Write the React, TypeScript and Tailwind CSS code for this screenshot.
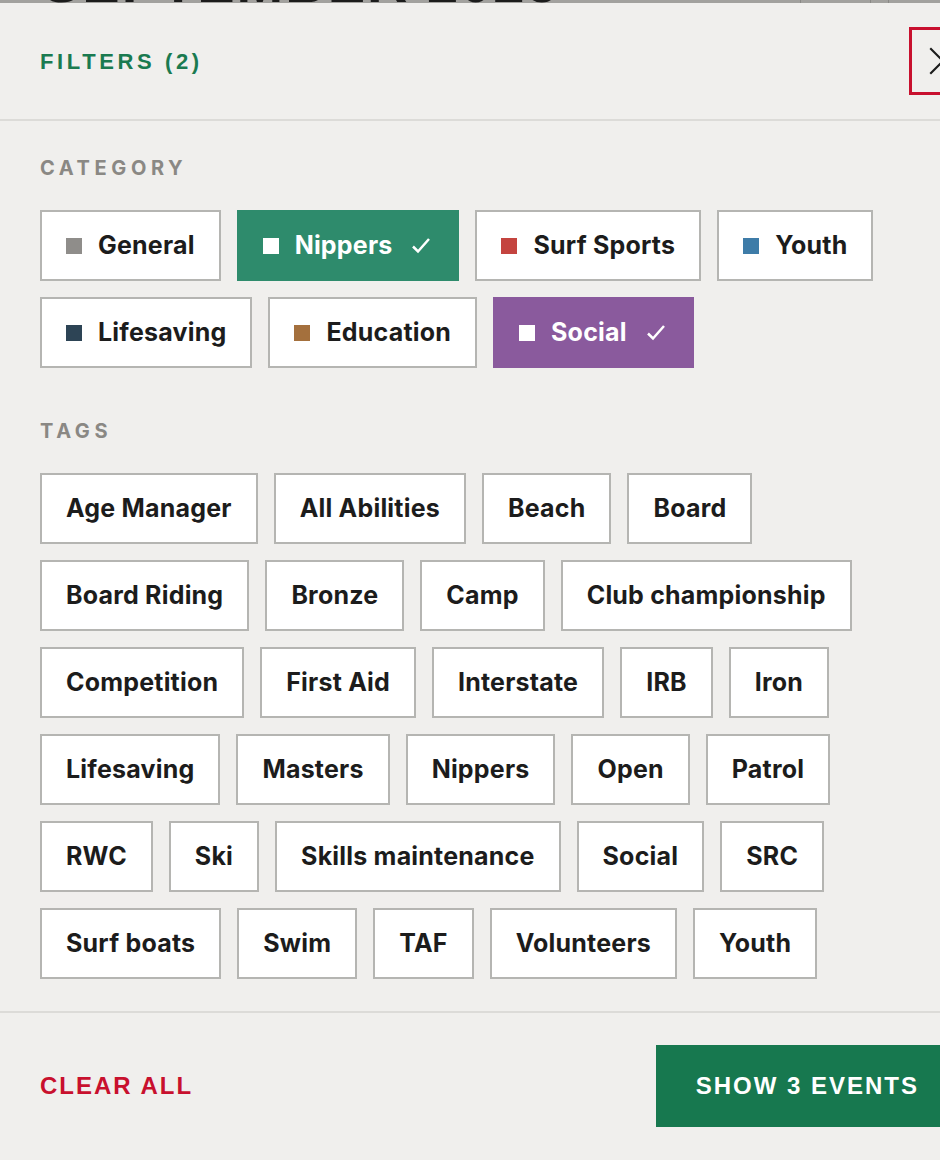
import { useState } from "react";

type Category = { name: string; color: string; selectedBg?: string };

const CATEGORIES: Category[] = [
  { name: "General", color: "bg-[#8f8d8a]" },
  { name: "Nippers", color: "bg-[#8f8d8a]", selectedBg: "bg-[#2e8b6c]" },
  { name: "Surf Sports", color: "bg-[#c4443f]" },
  { name: "Youth", color: "bg-[#3e7ca8]" },
  { name: "Lifesaving", color: "bg-[#2d4455]" },
  { name: "Education", color: "bg-[#a4703d]" },
  { name: "Social", color: "bg-[#8f8d8a]", selectedBg: "bg-[#8a5a9d]" },
];

const TAGS = [
  "Age Manager", "All Abilities", "Beach", "Board",
  "Board Riding", "Bronze", "Camp", "Club championship",
  "Competition", "First Aid", "Interstate", "IRB", "Iron",
  "Lifesaving", "Masters", "Nippers", "Open", "Patrol",
  "RWC", "Ski", "Skills maintenance", "Social", "SRC",
  "Surf boats", "Swim", "TAF", "Volunteers", "Youth",
];

const chipFont = { fontFamily: "Inter, 'Liberation Sans', sans-serif" };
const headFont = { fontFamily: "'Liberation Sans', Arial, sans-serif" };

export default function App() {
  const [selected, setSelected] = useState<string[]>(["Nippers", "Social"]);

  function toggle(name: string) {
    setSelected((s) => (s.includes(name) ? s.filter((n) => n !== name) : [...s, name]));
  }

  return (
    <div className="w-[940px] h-[1160px] overflow-hidden bg-[#f0efed] flex flex-col">
      {/* backdrop peeking above the panel */}
      <div className="h-[3px] bg-[#a2a19e] relative overflow-hidden shrink-0">
        <div
          className="absolute left-[43px] bottom-0 text-[56px] leading-[40px] font-black text-[#1c1c1c] tracking-[2px] whitespace-nowrap"
          style={headFont}
        >
          SEPTEMBER 2025
        </div>
        <div className="absolute left-[800px] top-0 w-px h-full bg-[#8a8986]" />
        <div className="absolute left-[870px] top-0 w-px h-full bg-[#8a8986]" />
        <div className="absolute left-[888px] top-0 w-px h-full bg-[#8a8986]" />
      </div>

      {/* header */}
      <div className="h-[116px] shrink-0 flex items-center pl-10 border-b-2 border-[#dcdbd8] box-content">
        <h2 className="text-[22px] font-bold tracking-[3.6px] text-[#1a7a50]" style={headFont}>
          FILTERS ({selected.length})
        </h2>
        <button className="ml-auto mr-[-37px] w-[68px] h-[68px] border-[3px] border-[#c8102e] flex items-center justify-center text-[#1c1c1c]">
          <svg className="w-[34px] h-[34px]" viewBox="0 0 24 24" fill="none" stroke="currentColor" strokeWidth={1.5}>
            <path d="M3 3l18 18M21 3L3 21" />
          </svg>
        </button>
      </div>

      {/* category */}
      <div className="px-10 pt-[35px]">
        <h3 className="text-[20px] leading-6 font-bold tracking-[4.6px] text-[#8a8884] mb-[30px]" style={chipFont}>
          CATEGORY
        </h3>
        <div className="flex flex-wrap gap-4" style={chipFont}>
          {CATEGORIES.map((c) => {
            const on = selected.includes(c.name);
            return (
              <button
                key={c.name}
                onClick={() => toggle(c.name)}
                className={`h-[71px] flex items-center px-[24px] border-2 text-[25px] font-bold tracking-[0.2px] ${
                  on ? `${c.selectedBg} border-transparent text-white pr-[26px]` : "bg-white border-[#b5b5b2] text-[#1c1c1c]"
                }`}
              >
                <span className={`w-4 h-4 mr-4 ${on ? "bg-white" : c.color}`} />
                {c.name}
                {on && (
                  <svg className="w-5 h-5 ml-[19px]" viewBox="0 0 20 20" fill="none" stroke="currentColor" strokeWidth={2.5}>
                    <path d="M2 10.5l5 5L18 3" />
                  </svg>
                )}
              </button>
            );
          })}
        </div>
      </div>

      {/* tags */}
      <div className="px-10 pt-[51px] pb-8 border-b-2 border-[#dcdbd8]">
        <h3 className="text-[20px] leading-6 font-bold tracking-[4.6px] text-[#8a8884] mb-[30px]" style={chipFont}>
          TAGS
        </h3>
        <div className="flex flex-wrap gap-4" style={chipFont}>
          {TAGS.map((t, i) => (
            <button
              key={t + i}
              className="h-[71px] flex items-center px-[24px] text-[25px] font-bold tracking-[0.2px] bg-white border-2 border-[#b5b5b2] text-[#1c1c1c]"
            >
              {t}
            </button>
          ))}
        </div>
      </div>

      {/* footer */}
      <div className="pl-10 pt-8 flex items-center">
        <button
          className="text-[24px] font-bold tracking-[2px] text-[#c8102e]"
          style={headFont}
          onClick={() => setSelected([])}
        >
          CLEAR ALL
        </button>
        <button
          className="ml-auto mr-[-19px] h-[82px] px-10 bg-[#17784f] text-white text-[24px] font-bold tracking-[2px] whitespace-nowrap"
          style={headFont}
        >
          SHOW 3 EVENTS
        </button>
      </div>
    </div>
  );
}
